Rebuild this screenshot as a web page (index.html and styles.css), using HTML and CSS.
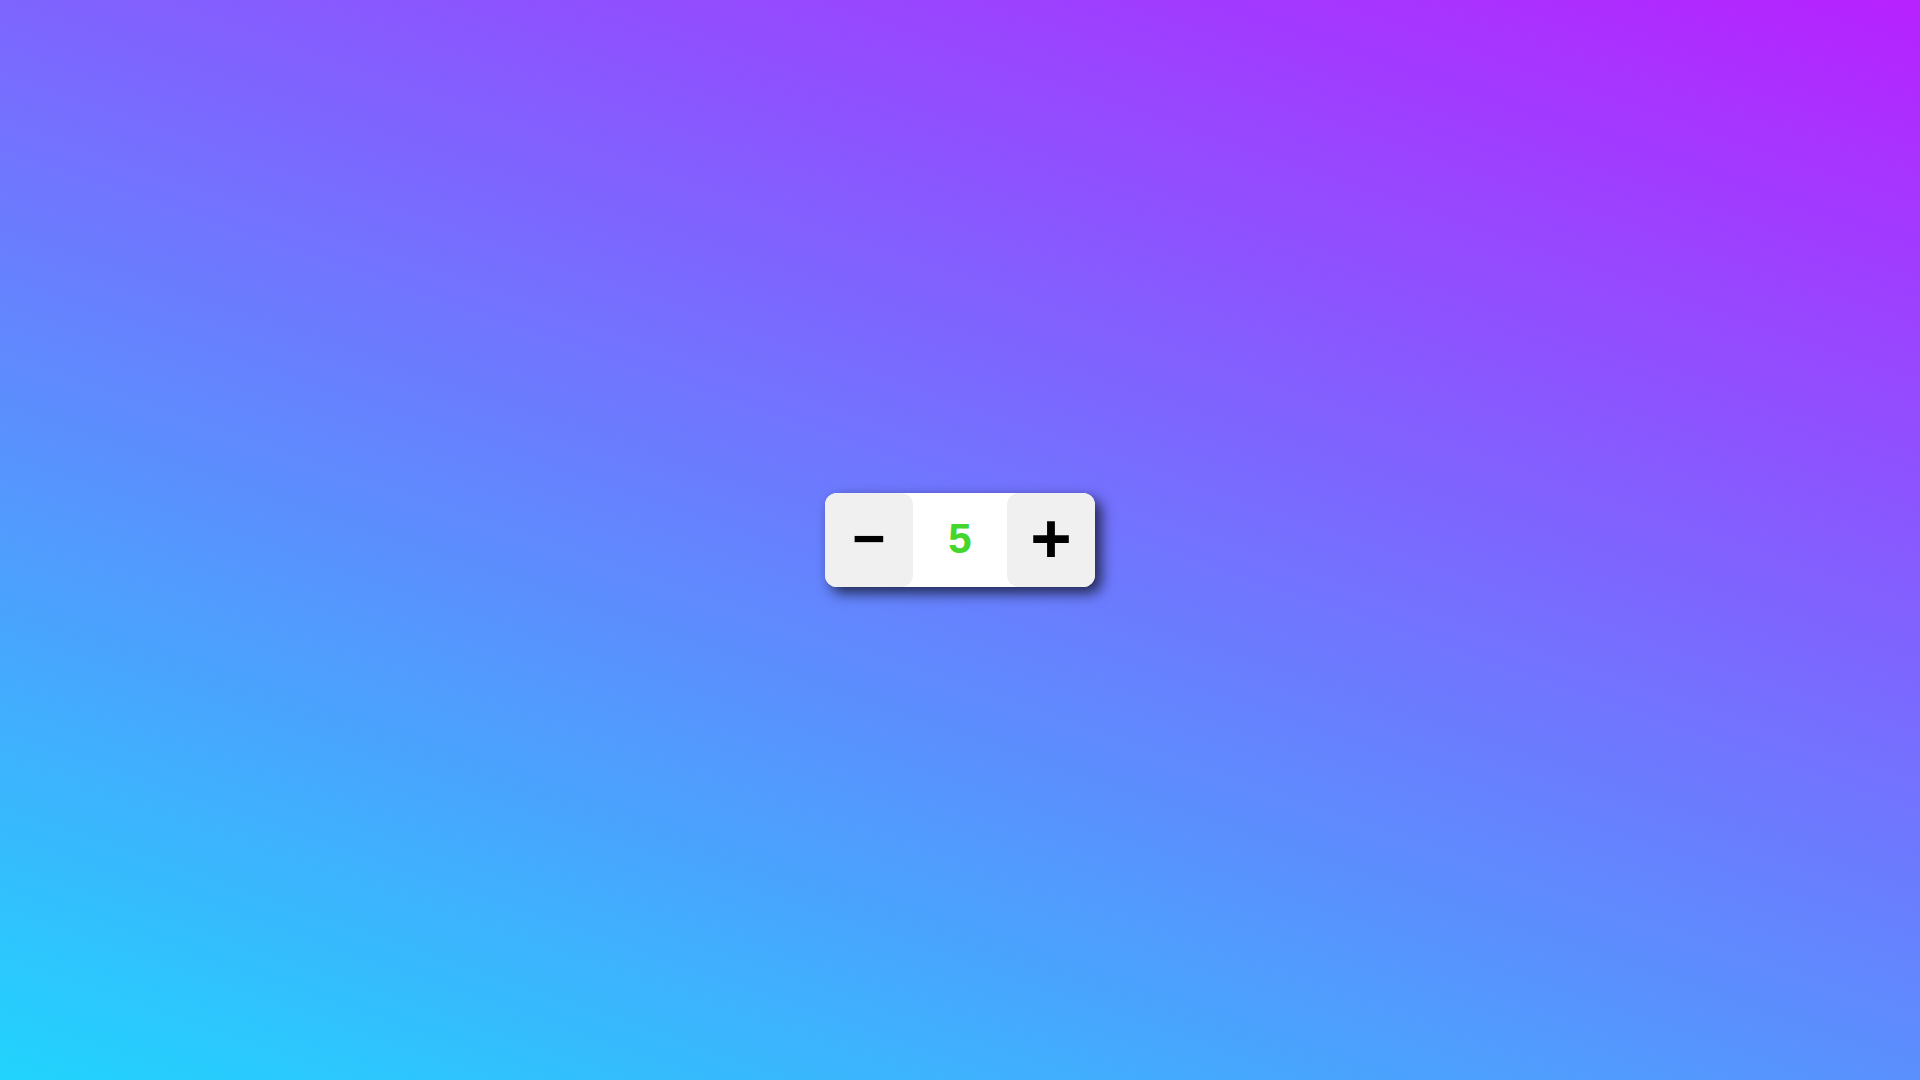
FILE: index.html
```html
<!DOCTYPE html>
<html>
<head>
<meta charset="utf-8">
<link rel="stylesheet" href="styles.css">
</head>
<body>
<div class="stage">
  <div class="counter">
    <button class="btn btn-minus">−</button>
    <span class="value">5</span>
    <button class="btn btn-plus">+</button>
  </div>
</div>
</body>
</html>
```
FILE: styles.css
```css
html, body {
  margin: 0;
  padding: 0;
  height: 100%;
}
body {
  background: linear-gradient(19deg, #21d4fd 0%, #b721ff 100%);
  font-family: "Liberation Sans", Arial, sans-serif;
}
.stage {
  height: 100vh;
  display: flex;
  align-items: center;
  justify-content: center;
}
.counter {
  display: flex;
  width: 270px;
  height: 94px;
  background: #fff;
  border-radius: 12px;
  box-shadow: 6px 6px 14px rgba(0, 0, 0, 0.7);
}
.btn {
  width: 88px;
  height: 94px;
  border: none;
  margin: 0;
  padding: 0 0 3px 0;
  background: #f0f0f0;
  border-radius: 12px;
  font-family: "Liberation Sans", Arial, sans-serif;
  font-weight: bold;
  color: #000;
  display: flex;
  align-items: center;
  justify-content: center;
  line-height: 1;
}
.btn-minus {
  font-size: 57px;
}
.btn-plus {
  font-size: 71px;
}
.value {
  flex: 1;
  display: flex;
  align-items: center;
  justify-content: center;
  padding-bottom: 3px;
  font-size: 42px;
  font-weight: bold;
  color: #44d62c;
}
```
